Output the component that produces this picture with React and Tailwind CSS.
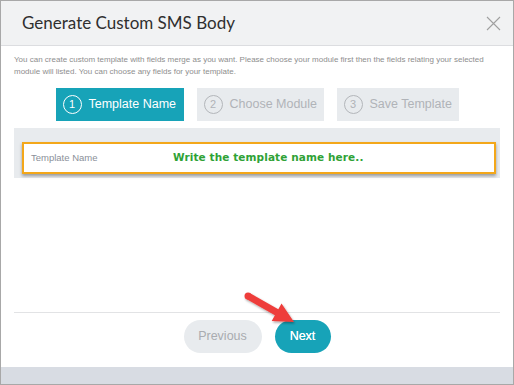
import React from "react";

function Step({ n, label, active, w }) {
  return (
    <div
      className={
        "h-[33px] flex items-center pl-[7px] gap-[7px] " +
        (active ? "bg-[#17a3b8] text-white" : "bg-[#e8ebee] text-[#b0b3b8]")
      }
      style={{ width: w }}
    >
      <div
        className={
          "w-[19px] h-[19px] rounded-full border flex items-center justify-center text-[11px] leading-none " +
          (active ? "border-white" : "border-[#b3b6ba]")
        }
      >
        {n}
      </div>
      <span className="text-[12.5px] leading-none">{label}</span>
    </div>
  );
}

export default function App() {
  return (
    <div className="w-[514px] h-[385px] border border-[#a8a8a8] flex flex-col bg-white relative overflow-hidden font-['Liberation_Sans',Arial,sans-serif]">
      <div className="h-[45px] shrink-0 bg-[#f1f2f3] border-b border-[#dcdde0] flex items-center justify-between pl-[21px] pr-[12px]">
        <span className="font-['Lato',sans-serif] text-[17px] text-[#2f2f2f]">Generate Custom SMS Body</span>
        <svg width="15" height="15" viewBox="0 0 15 15">
          <path d="M1 1 L14 14 M14 1 L1 14" stroke="#a0a0a0" strokeWidth="1.1" fill="none" />
        </svg>
      </div>
      <div className="flex-1 flex flex-col px-[13px]">
        <p className="mt-[8px] text-[8px] leading-[11.5px] text-[#8e8e8e]">
          You can create custom template with fields merge as you want. Please choose your module first then the fields relating your selected module will listed. You can choose any fields for your template.
        </p>
        <div className="flex justify-center gap-[13px] mt-[11px]">
          <Step n="1" label="Template Name" active w={128} />
          <Step n="2" label="Choose Module" w={127} />
          <Step n="3" label="Save Template" w={122} />
        </div>
        <div className="mt-[7px] h-[50px] bg-[#e8ebee] pl-[8px] pr-[4px] pt-[14px]">
          <div className="h-[32px] border-2 border-[#f3a71a] bg-white shadow-[0_2px_3px_rgba(0,0,0,0.35)] flex items-center pl-[7px]">
            <span className="text-[9.5px] text-[#8a8f99] w-[142px]">Template Name</span>
            <span className="font-['DejaVu_Sans',sans-serif] font-bold text-[10.5px] text-[#2fa236] tracking-[0.1px]">Write the template name here..</span>
          </div>
        </div>
        <div className="flex-1" />
        <div className="border-t border-[#e2e3e5]" />
        <div className="flex justify-center gap-[13px] pt-[7px]">
          <div className="w-[78px] h-[33px] rounded-full bg-[#e8ebee] text-[#a9acb0] text-[12.5px] flex items-center justify-center">Previous</div>
          <div className="w-[56px] h-[33px] rounded-full bg-[#17a3b8] text-white text-[12.5px] flex items-center justify-center [text-shadow:0_0_0.4px_white]">Next</div>
        </div>
        <div className="h-[14px]" />
      </div>
      <div className="h-[17px] shrink-0 bg-[#d8dce3]" />
      <svg className="absolute left-[238px] top-[286px]" width="64" height="44" viewBox="0 0 64 44">
        <defs>
          <filter id="sh" x="-20%" y="-20%" width="140%" height="140%">
            <feDropShadow dx="1" dy="1.5" stdDeviation="1.2" floodColor="#000" floodOpacity="0.35" />
          </filter>
        </defs>
        <g filter="url(#sh)" fill="#ee3e3b">
          <path d="M10.7 6 L39.3 22.2 L42.5 16.5 L55 35 L32.7 33.9 L35.9 28.2 L7.3 12 Z" />
          <circle cx="9" cy="9" r="3.5" />
        </g>
      </svg>
    </div>
  );
}
